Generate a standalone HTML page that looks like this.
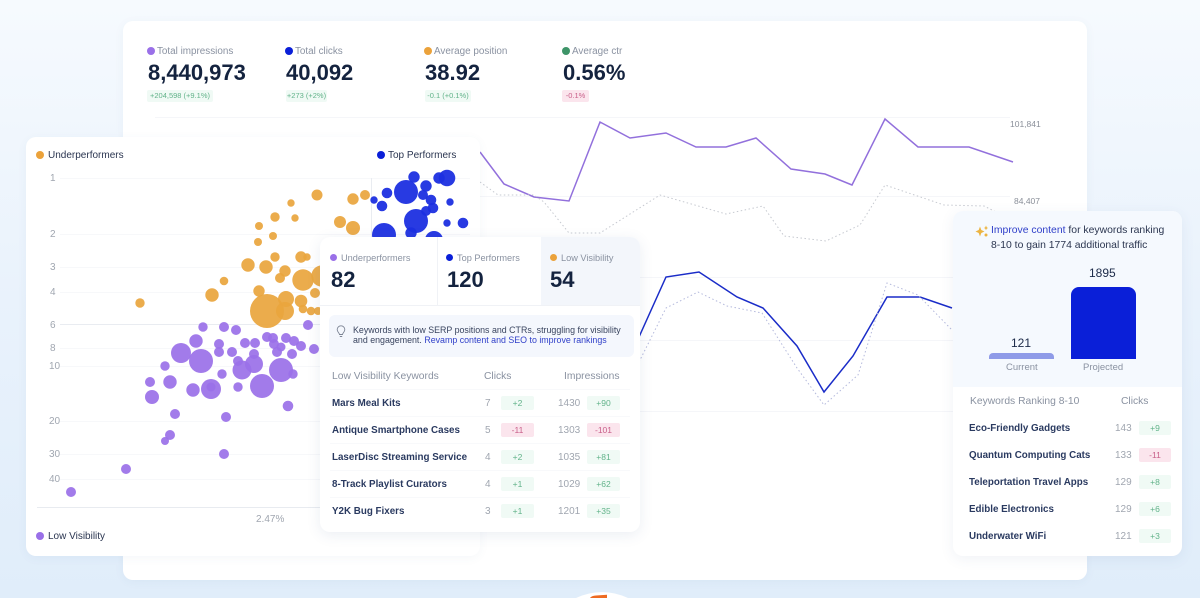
<!DOCTYPE html>
<html><head><meta charset="utf-8"><style>
html,body{margin:0;padding:0;height:598px;overflow:hidden}
body{width:1200px;position:relative;background:linear-gradient(180deg,#f6fafe 0%,#e9f2fc 50%,#e0edfa 100%);font-family:"Liberation Sans",sans-serif;color:#14233f}
#w{position:absolute;left:0;top:0;width:1200px;height:598px;overflow:hidden;filter:blur(.35px)}
.a{position:absolute;white-space:nowrap;line-height:14px}
.card{position:absolute;background:#fff;border-radius:10px;box-shadow:0 2px 10px rgba(60,90,140,.05)}
.d{position:absolute;width:8px;height:8px;border-radius:50%}
.l{font-size:9.9px;color:#8a92a1;margin-top:1px}
.m{font-size:9.2px;color:#8a92a1}
.g{font-size:10px;color:#2a3550;margin-top:1px}
.n{font-size:22px;font-weight:bold;line-height:26px;color:#14233f}
.b{position:absolute;height:14px;line-height:14px;font-size:8.5px;border-radius:2px;background:#f0faf5;color:#62b38a;text-align:center}
.r{background:#fbe5ed;color:#c9608a}
.k{font-size:9.8px;font-weight:bold;color:#2a3a60;margin-top:1px}
.v{font-size:10px;color:#a0a6b0;margin-top:1px}
.h{font-size:10.3px;color:#8a92a1;margin-top:1px}
</style></head><body><div id="w">
<div class="card" style="left:123px;top:21px;width:964px;height:559px"></div>
<span class="d" style="left:147px;top:47px;background:#9a70e8"></span><span class="a l" style="left:157px;top:44px">Total impressions</span>
<span class="d" style="left:285px;top:47px;background:#0a1fd8"></span><span class="a l" style="left:295px;top:44px">Total clicks</span>
<span class="d" style="left:424px;top:47px;background:#eba23b"></span><span class="a l" style="left:434px;top:44px">Average position</span>
<span class="d" style="left:562px;top:47px;background:#3e9468"></span><span class="a l" style="left:572px;top:44px">Average ctr</span>
<span class="a n" style="left:148px;top:60px">8,440,973</span>
<span class="a n" style="left:286px;top:60px">40,092</span>
<span class="a n" style="left:425px;top:60px">38.92</span>
<span class="a n" style="left:563px;top:60px">0.56%</span>
<span class="b" style="left:147px;top:90px;width:66px;height:12px;line-height:12px;font-size:7.5px">+204,598 (+9.1%)</span>
<span class="b" style="left:286px;top:90px;width:41px;height:12px;line-height:12px;font-size:7.5px">+273 (+2%)</span>
<span class="b" style="left:425px;top:90px;width:46px;height:12px;line-height:12px;font-size:7.5px">-0.1 (+0.1%)</span>
<span class="b r" style="left:562px;top:90px;width:27px;height:12px;line-height:12px;font-size:7.5px">-0.1%</span>

<svg class="a" style="left:0;top:0" width="1200" height="598" fill="none">
<g stroke="#f5f6f9" stroke-width="1"><path d="M155 117.5H1010M155 196.5H1010M155 277.5H1010M155 340.5H1010M155 411.5H1010"/></g>
<path d="M480 152L504 184L534 197L569 201L600 122L630 138L666 133L696 147L726 147L756 138L791 169L825 174L852 185L885 119L918 147L969 147L1013 162" stroke="#9270dc" stroke-width="1.5"/>
<path d="M480 182L498 195L534 195L544 202L569 233L600 233L660 195L726 214L763 206L784 236L826 241L860 225L885 185L944 205L984 206L1000 214" stroke="#c6c9d0" stroke-width="1" stroke-dasharray="1.5 2.5"/>
<path d="M639 337L666 277L699 272L737 297L763 308L797 346L824 392L853 356L887 297L920 297L952 308" stroke="#1a2cc8" stroke-width="1.5"/>
<path d="M639 362L666 308L698 292L727 306L762 313L797 368L824 405L858 375L887 283L918 295L952 330" stroke="#b4b9dc" stroke-width="1" stroke-dasharray="1.5 2.5"/>
</svg>
<span class="a" style="left:1010px;top:117px;font-size:8.5px;color:#8a8f99">101,841</span>
<span class="a" style="left:1014px;top:194px;font-size:8.5px;color:#8a8f99">84,407</span>

<div class="card" style="left:26px;top:137px;width:454px;height:419px"></div>
<svg class="a" style="left:0;top:0" width="1200" height="598">
<g stroke="#f7f8fa"><path d="M60 178.5H470M60 234.5H470M60 267.5H470M60 292.5H470M60 348.5H470M60 366.5H470M60 421.5H470M60 454.5H470M60 479.5H470"/></g>
<path d="M60 324.5H470" stroke="#e9ecf1"/><path d="M37 507.5H480" stroke="#e8ebf0"/><path d="M371.5 178V320" stroke="#e9ecf1"/>
<g fill="#e9a53d" fill-opacity=".92">
<circle cx="317" cy="195" r="5.5"/><circle cx="291" cy="203" r="3.7"/><circle cx="275" cy="217" r="4.7"/><circle cx="295" cy="218" r="3.7"/><circle cx="259" cy="226" r="4"/><circle cx="273" cy="236" r="4"/><circle cx="258" cy="242" r="4"/><circle cx="275" cy="257" r="4.7"/><circle cx="301" cy="257" r="5.7"/><circle cx="307" cy="257" r="3.7"/><circle cx="248" cy="265" r="6.7"/><circle cx="266" cy="267" r="6.7"/><circle cx="285" cy="271" r="5.7"/><circle cx="280" cy="278" r="5"/><circle cx="303" cy="280" r="10.7"/><circle cx="322" cy="276" r="10.7"/><circle cx="224" cy="281" r="4.3"/><circle cx="259" cy="291" r="5.7"/><circle cx="315" cy="293" r="5"/><circle cx="212" cy="295" r="6.7"/><circle cx="140" cy="303" r="4.7"/><circle cx="286" cy="299" r="8"/><circle cx="301" cy="301" r="6.3"/><circle cx="267" cy="311" r="17"/><circle cx="285" cy="311" r="9"/><circle cx="303" cy="309" r="4.3"/><circle cx="311" cy="311" r="4.3"/><circle cx="318" cy="311" r="4"/><circle cx="353" cy="199" r="5.7"/><circle cx="365" cy="195" r="5"/><circle cx="340" cy="222" r="6"/><circle cx="353" cy="228" r="7"/>
</g>
<g fill="#1c2fe0" fill-opacity=".95">
<circle cx="414" cy="177" r="5.7"/><circle cx="447" cy="178" r="8.3"/><circle cx="439" cy="178" r="5.7"/><circle cx="406" cy="192" r="12"/><circle cx="426" cy="186" r="5.7"/><circle cx="387" cy="193" r="5.3"/><circle cx="374" cy="200" r="3.7"/><circle cx="382" cy="206" r="5.3"/><circle cx="423" cy="195" r="5"/><circle cx="431" cy="200" r="5.3"/><circle cx="450" cy="202" r="3.7"/><circle cx="433" cy="208" r="5.3"/><circle cx="426" cy="211" r="5"/><circle cx="416" cy="221" r="12"/><circle cx="447" cy="223" r="3.7"/><circle cx="463" cy="223" r="5.3"/><circle cx="411" cy="233" r="5.7"/><circle cx="384" cy="235" r="12"/><circle cx="434" cy="240" r="9"/>
</g>
<g fill="#9a70e8" fill-opacity=".92">
<circle cx="203" cy="327" r="4.7"/><circle cx="224" cy="327" r="5"/><circle cx="236" cy="330" r="5"/><circle cx="308" cy="325" r="5"/><circle cx="196" cy="341" r="6.7"/><circle cx="219" cy="344" r="5"/><circle cx="245" cy="343" r="5"/><circle cx="255" cy="343" r="5"/><circle cx="267" cy="337" r="5"/><circle cx="273" cy="338" r="5"/><circle cx="286" cy="338" r="5"/><circle cx="294" cy="341" r="5"/><circle cx="181" cy="353" r="10"/><circle cx="201" cy="361" r="12"/><circle cx="219" cy="352" r="5"/><circle cx="232" cy="352" r="5"/><circle cx="254" cy="354" r="5"/><circle cx="238" cy="361" r="5"/><circle cx="254" cy="364" r="9"/><circle cx="242" cy="370" r="9.5"/><circle cx="281" cy="370" r="12"/><circle cx="274" cy="344" r="5"/><circle cx="281" cy="347" r="4.5"/><circle cx="277" cy="352" r="5"/><circle cx="292" cy="354" r="5"/><circle cx="301" cy="346" r="5"/><circle cx="314" cy="349" r="5"/><circle cx="165" cy="366" r="4.7"/><circle cx="222" cy="374" r="4.7"/><circle cx="293" cy="374" r="4.7"/><circle cx="150" cy="382" r="5"/><circle cx="170" cy="382" r="6.7"/><circle cx="193" cy="390" r="6.7"/><circle cx="211" cy="389" r="10"/><circle cx="211" cy="387" r="4.5"/><circle cx="238" cy="387" r="4.7"/><circle cx="262" cy="386" r="12"/><circle cx="152" cy="397" r="7"/><circle cx="288" cy="406" r="5.3"/><circle cx="175" cy="414" r="5"/><circle cx="226" cy="417" r="5"/><circle cx="170" cy="435" r="5"/><circle cx="165" cy="441" r="4"/><circle cx="224" cy="454" r="5"/><circle cx="126" cy="469" r="5"/><circle cx="71" cy="492" r="5"/>
</g>
</svg>
<span class="d" style="left:36px;top:151px;background:#eba23b"></span><span class="a g" style="left:48px;top:148px">Underperformers</span>
<span class="d" style="left:377px;top:151px;background:#0a1fd8"></span><span class="a g" style="left:388px;top:148px">Top Performers</span>
<span class="d" style="left:36px;top:532px;background:#9a70e8"></span><span class="a g" style="left:48px;top:529px">Low Visibility</span>
<span class="a v" style="left:50px;top:171px">1</span><span class="a v" style="left:50px;top:227px">2</span><span class="a v" style="left:50px;top:260px">3</span><span class="a v" style="left:50px;top:285px">4</span><span class="a v" style="left:50px;top:318px">6</span><span class="a v" style="left:50px;top:341px">8</span><span class="a v" style="left:49px;top:359px">10</span><span class="a v" style="left:49px;top:414px">20</span><span class="a v" style="left:49px;top:447px">30</span><span class="a v" style="left:49px;top:472px">40</span>
<span class="a v" style="left:256px;top:512px">2.47%</span>

<div class="card" style="left:320px;top:237px;width:320px;height:295px;box-shadow:0 3px 14px rgba(60,90,140,.1)"></div>
<div class="a" style="left:541px;top:237px;width:99px;height:68px;background:#f3f6fb;border-radius:0 10px 0 0"></div>
<div class="a" style="left:437px;top:237px;width:1px;height:68px;background:#f0f2f6"></div>
<div class="a" style="left:320px;top:305px;width:320px;height:1px;background:#f0f2f6"></div>
<span class="d" style="left:330px;top:254px;width:7px;height:7px;background:#9a70e8"></span><span class="a m" style="left:341px;top:251px">Underperformers</span>
<span class="d" style="left:446px;top:254px;width:7px;height:7px;background:#0a1fd8"></span><span class="a m" style="left:457px;top:251px">Top Performers</span>
<span class="d" style="left:550px;top:254px;width:7px;height:7px;background:#eba23b"></span><span class="a m" style="left:561px;top:251px">Low Visibility</span>
<span class="a n" style="left:331px;top:267px">82</span><span class="a n" style="left:447px;top:267px">120</span><span class="a n" style="left:550px;top:267px">54</span>
<div class="a" style="left:329px;top:315px;width:305px;height:42px;background:#f4f7fd;border-radius:6px"></div>
<svg class="a" style="left:336px;top:325px" width="10" height="13" fill="none" stroke="#7c8494" stroke-width=".9"><path d="M3.5 9.5C3.3 7.8 1.2 6.800 1.200 4.600A3.800 3.800 0 0 1 8.800 4.600C8.800 6.800 6.700 7.800 6.500 9.500ZM3.800 11.500H6.200"/></svg>
<span class="a" style="left:353px;top:323px;font-size:8.85px;color:#39445f">Keywords with low SERP positions and CTRs, struggling for visibility</span>
<span class="a" style="left:353px;top:333px;font-size:8.85px;color:#39445f">and engagement. <span style="color:#2f3fc9">Revamp content and SEO to improve rankings</span></span>
<span class="a h" style="left:332px;top:369px">Low Visibility Keywords</span><span class="a h" style="left:484px;top:369px">Clicks</span><span class="a h" style="left:564px;top:369px">Impressions</span>
<svg class="a" style="left:0;top:0" width="1200" height="598"><path d="M330 389.500H630M330 416.500H630M330 443.500H630M330 470.500H630M330 497.500H630M965 414.500H1172M965 441.500H1172M965 468.500H1172M965 495.500H1172M965 522.500H1172" stroke="#f8f9fb"/></svg>
<span class="a k" style="left:332px;top:396px">Mars Meal Kits</span><span class="a v" style="left:485px;top:396px">7</span><span class="b" style="left:501px;top:396px;width:33px">+2</span><span class="a v" style="left:558px;top:396px">1430</span><span class="b" style="left:587px;top:396px;width:33px">+90</span>
<span class="a k" style="left:332px;top:423px">Antique Smartphone Cases</span><span class="a v" style="left:485px;top:423px">5</span><span class="b r" style="left:501px;top:423px;width:33px">-11</span><span class="a v" style="left:558px;top:423px">1303</span><span class="b r" style="left:587px;top:423px;width:33px">-101</span>
<span class="a k" style="left:332px;top:450px">LaserDisc Streaming Service</span><span class="a v" style="left:485px;top:450px">4</span><span class="b" style="left:501px;top:450px;width:33px">+2</span><span class="a v" style="left:558px;top:450px">1035</span><span class="b" style="left:587px;top:450px;width:33px">+81</span>
<span class="a k" style="left:332px;top:477px">8-Track Playlist Curators</span><span class="a v" style="left:485px;top:477px">4</span><span class="b" style="left:501px;top:477px;width:33px">+1</span><span class="a v" style="left:558px;top:477px">1029</span><span class="b" style="left:587px;top:477px;width:33px">+62</span>
<span class="a k" style="left:332px;top:504px">Y2K Bug Fixers</span><span class="a v" style="left:485px;top:504px">3</span><span class="b" style="left:501px;top:504px;width:33px">+1</span><span class="a v" style="left:558px;top:504px">1201</span><span class="b" style="left:587px;top:504px;width:33px">+35</span>

<div class="card" style="left:953px;top:211px;width:229px;height:345px;box-shadow:0 3px 14px rgba(60,90,140,.08)"></div>
<div class="a" style="left:953px;top:211px;width:229px;height:176px;background:#f5f9fe;border-radius:10px 10px 0 0"></div>
<svg class="a" style="left:975px;top:224px" width="14" height="14" fill="#ecb441"><path d="M5 2.500L6.300 6 9.500 7.500 6.300 9 5 12.500 3.700 9 .5 7.500 3.700 6Z"/><path d="M11 1.500L11.700 3.300 13 4 11.700 4.700 11 6.300 10.300 4.700 9 4 10.300 3.300Z"/><circle cx="11" cy="11" r="1.500"/></svg>
<span class="a" style="left:991px;top:224px;font-size:10.4px;color:#2b3650"><span style="color:#2f3fc9">Improve content</span> for keywords ranking</span>
<span class="a" style="left:991px;top:239px;font-size:10.4px;color:#2b3650">8-10 to gain 1774 additional traffic</span>
<span class="a" style="left:1089px;top:266px;font-size:12px;color:#1c2a48">1895</span>
<div class="a" style="left:1071px;top:287px;width:65px;height:72px;background:#0a1fd8;border-radius:8px 8px 0 0"></div>
<span class="a" style="left:1011px;top:336px;font-size:12px;color:#1c2a48">121</span>
<div class="a" style="left:989px;top:353px;width:65px;height:6px;background:#8f9be8;border-radius:4px 4px 0 0"></div>
<span class="a" style="left:1006px;top:361px;font-size:9.5px;color:#8a92a1">Current</span><span class="a" style="left:1083px;top:361px;font-size:9.5px;color:#8a92a1">Projected</span>
<span class="a h" style="left:970px;top:394px">Keywords Ranking 8-10</span><span class="a h" style="left:1121px;top:394px">Clicks</span>
<span class="a k" style="left:969px;top:421px">Eco-Friendly Gadgets</span><span class="a v" style="left:1115px;top:421px">143</span><span class="b" style="left:1139px;top:421px;width:32px">+9</span>
<span class="a k" style="left:969px;top:448px">Quantum Computing Cats</span><span class="a v" style="left:1115px;top:448px">133</span><span class="b r" style="left:1139px;top:448px;width:32px">-11</span>
<span class="a k" style="left:969px;top:475px">Teleportation Travel Apps</span><span class="a v" style="left:1115px;top:475px">129</span><span class="b" style="left:1139px;top:475px;width:32px">+8</span>
<span class="a k" style="left:969px;top:502px">Edible Electronics</span><span class="a v" style="left:1115px;top:502px">129</span><span class="b" style="left:1139px;top:502px;width:32px">+6</span>
<span class="a k" style="left:969px;top:529px">Underwater WiFi</span><span class="a v" style="left:1115px;top:529px">121</span><span class="b" style="left:1139px;top:529px;width:32px">+3</span>

<svg class="a" style="left:560px;top:588px" width="80" height="10"><path d="M16 10A60 60 0 0 1 68 10Z" fill="#fff"/><path d="M30 10C31 8.500 33 7.800 36 7.500L47 6.800V10Z" fill="#ee6b22"/></svg>
</div></body></html>
